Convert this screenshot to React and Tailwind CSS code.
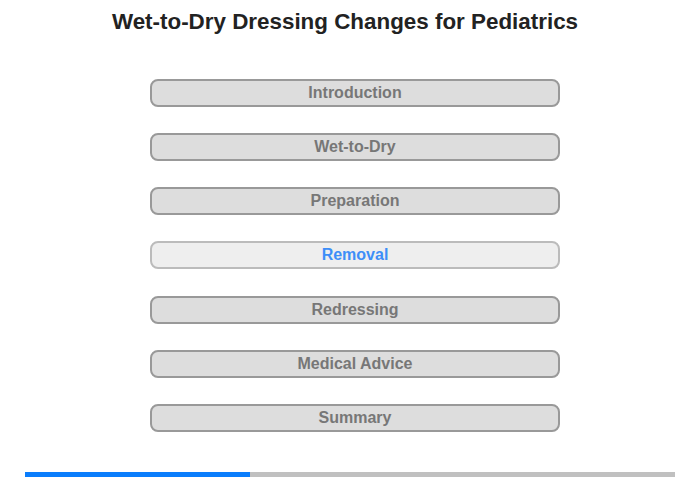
const sections = [
  { key: 'intro', label: 'Introduction' },
  { key: 'wtd', label: 'Wet-to-Dry' },
  { key: 'prep', label: 'Preparation' },
  { key: 'removal', label: 'Removal', active: true },
  { key: 'redress', label: 'Redressing' },
  { key: 'advice', label: 'Medical Advice' },
  { key: 'summary', label: 'Summary' },
]

export default function App() {
  return (
    <div className="w-[700px] h-[480px] bg-white flex flex-col" style={{ fontFamily: '"Liberation Sans", Arial, sans-serif' }}>
      {/* Title */}
      <h1 className="pt-[9px] pr-[10px] text-center text-[22.4px] leading-[26px] font-bold text-[#222222]">
        Wet-to-Dry Dressing Changes for Pediatrics
      </h1>

      {/* Section menu */}
      <nav className="mt-[44px] ml-[150px] w-[410px] flex flex-col gap-[26.17px]">
        {sections.map(({ key, label, active }) => (
          <div
            key={key}
            className={
              active
                ? 'h-[28px] rounded-[8px] border-2 border-[#bbbbbb] bg-[#eeeeee] flex items-center justify-center text-[16px] font-bold text-[#3d8ef8]'
                : 'h-[28px] rounded-[8px] border-2 border-[#999999] bg-[#dddddd] flex items-center justify-center text-[16px] font-bold text-[#777777]'
            }
          >
            {label}
          </div>
        ))}
      </nav>

      {/* Progress */}
      <div className="mt-auto mb-[3px] mx-[25px] h-[5px] bg-[#c0c0c0] flex">
        <div className="w-[225px] h-full bg-[#0a7dfc]" />
      </div>
    </div>
  )
}
